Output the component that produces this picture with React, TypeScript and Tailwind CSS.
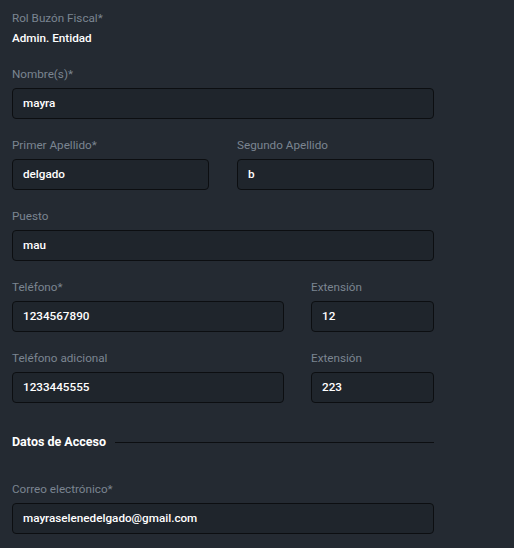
import React from "react";

const font = { fontFamily: "Roboto, 'Liberation Sans', sans-serif" };

function Field({ label, value }: { label: string; value: string }) {
  return (
    <div className="flex flex-col">
      <label className="text-[11.7px] leading-[18px] text-[#7b8591] mb-[5px]">{label}</label>
      <div className="h-[31px] rounded-[4px] border border-[#0c0e11] bg-[#1f252c] px-[10px] flex items-center text-[11.7px] font-medium text-white">
        {value}
      </div>
    </div>
  );
}

export default function App() {
  return (
    <div className="min-h-[548px] w-full bg-[#242a32]" style={font}>
      <div className="w-[434px] pl-[12px] pt-[10px] flex flex-col">
        <div className="text-[11.7px] leading-[16px] text-[#7b8591]">Rol Buzón Fiscal*</div>
        <div className="mt-[3px] text-[11.7px] leading-[18px] font-medium text-white">Admin. Entidad</div>

        <div className="mt-[18px] flex flex-col gap-[17px]">
          <Field label="Nombre(s)*" value="mayra" />
          <div className="grid grid-cols-2 gap-[28px]">
            <Field label="Primer Apellido*" value="delgado" />
            <Field label="Segundo Apellido" value="b" />
          </div>
          <Field label="Puesto" value="mau" />
          <div className="grid grid-cols-[272px_1fr] gap-[27px]">
            <Field label="Teléfono*" value="1234567890" />
            <Field label="Extensión" value="12" />
          </div>
          <div className="grid grid-cols-[272px_1fr] gap-[27px]">
            <Field label="Teléfono adicional" value="1233445555" />
            <Field label="Extensión" value="223" />
          </div>
        </div>

        <div className="mt-[30px] flex items-center gap-[9px]">
          <span className="text-[12.5px] leading-[18px] font-bold text-white">Datos de Acceso</span>
          <div className="flex-1 h-px bg-[#0c0e11]" />
        </div>

        <div className="mt-[29px]">
          <Field label="Correo electrónico*" value="mayraselenedelgado@gmail.com" />
        </div>
      </div>
    </div>
  );
}
